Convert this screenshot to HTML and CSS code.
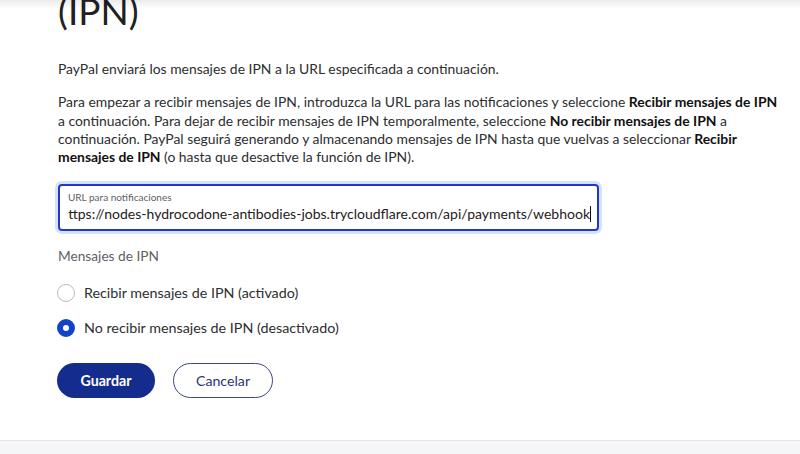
FILE: index.html
```html
<!DOCTYPE html>
<html lang="es">
<head>
<meta charset="utf-8">
<title>IPN</title>
<link rel="stylesheet" href="styles.css">
</head>
<body>
<div class="header-shadow"></div>
<main class="card">
  <h1 class="title">(IPN)</h1>
  <p class="intro">PayPal enviará los mensajes de IPN a la URL especificada a continuación.</p>
  <p class="desc">Para empezar a recibir mensajes de IPN, introduzca la URL para las notificaciones y seleccione <b>Recibir mensajes de IPN</b> a continuación. Para dejar de recibir mensajes de IPN temporalmente, seleccione <b>No recibir mensajes de IPN</b> a continuación. PayPal seguirá generando y almacenando mensajes de IPN hasta que vuelvas a seleccionar <b>Recibir mensajes de IPN</b> (o hasta que desactive la función de IPN).</p>
  <div class="field">
    <div class="field-label">URL para notificaciones</div>
    <div class="field-value"><span>ttps://nodes-hydrocodone-antibodies-jobs.trycloudflare.com/api/payments/webhook</span><span class="caret"></span></div>
  </div>
  <div class="group-label">Mensajes de IPN</div>
  <div class="radio-row first"><span class="radio"></span><span>Recibir mensajes de IPN (activado)</span></div>
  <div class="radio-row second"><span class="radio checked"></span><span>No recibir mensajes de IPN (desactivado)</span></div>
  <div class="actions">
    <button class="btn primary">Guardar</button>
    <button class="btn secondary">Cancelar</button>
  </div>
</main>
<div class="footer-bg"></div>
</body>
</html>
```
FILE: styles.css
```css
html, body {
  margin: 0;
  padding: 0;
  background: #ffffff;
}
body {
  font-family: Lato, "Noto Sans", sans-serif;
  color: #2c2e2f;
  width: 800px;
  height: 454px;
  overflow: hidden;
  position: relative;
}
.header-shadow {
  position: absolute;
  left: 0;
  top: 0;
  width: 800px;
  height: 9px;
  background: linear-gradient(rgba(0,0,0,0.08), rgba(0,0,0,0.02) 75%, rgba(0,0,0,0));
  z-index: 2;
}
.card {
  display: flow-root;
  height: 441px;
  padding: 0 15px 0 58px;
  box-sizing: border-box;
  border-bottom: 1px solid #e6e7ea;
}
.title {
  margin: -11.5px 0 0 0;
  font-size: 37px;
  font-weight: 400;
  line-height: 44px;
  color: #1f2021;
}
.intro {
  margin: 27.5px 0 0 0;
  font-size: 13.9px;
  line-height: 18.3px;
}
.desc {
  margin: 15px 0 0 0;
  font-size: 13.9px;
  line-height: 18.3px;
}
.desc b {
  font-weight: 700;
  color: #111;
}
.field {
  margin-top: 18px;
  width: 541px;
  height: 47px;
  box-sizing: border-box;
  border: 2px solid #2236c8;
  border-radius: 4px;
  box-shadow: 0 0 0 3px #d6e2fb;
  padding: 5px 0 0 8px;
  overflow: hidden;
}
.field-label {
  font-size: 10px;
  line-height: 13px;
  color: #5e6166;
}
.field-value {
  display: flex;
  justify-content: flex-end;
  align-items: center;
  padding-right: 6px;
  font-size: 14px;
  line-height: 20px;
  color: #1f2021;
  white-space: nowrap;
  overflow: hidden;
}
.caret {
  display: inline-block;
  flex: none;
  width: 1px;
  height: 16px;
  background: #111;
}
.group-label {
  margin-top: 16px;
  font-size: 13.7px;
  line-height: 18px;
  color: #5e6166;
}
.radio-row {
  display: flex;
  align-items: center;
  gap: 9px;
  font-size: 14.3px;
  line-height: 18px;
  margin-left: -1px;
}
.radio-row.first { margin-top: 19px; }
.radio-row.second { margin-top: 17px; }
.radio {
  width: 18px;
  height: 18px;
  border: 1px solid #b7bcc2;
  border-radius: 50%;
  box-sizing: border-box;
  background: #fff;
  flex: none;
}
.radio.checked {
  border: 6px solid #1443c6;
  background: #fff;
}
.actions {
  display: flex;
  gap: 18px;
  margin-top: 26px;
  margin-left: -1px;
}
.btn {
  height: 35px;
  border-radius: 18px;
  font-family: Lato, "Noto Sans", sans-serif;
  font-size: 14.2px;
  box-sizing: border-box;
  cursor: pointer;
}
.primary {
  width: 98px;
  background: #142c8e;
  color: #fff;
  border: none;
  font-weight: 700;
}
.secondary {
  width: 100px;
  background: #fff;
  color: #2a3572;
  border: 1px solid #3b4589;
}
.footer-bg {
  height: 13px;
  background: #f5f6f8;
}
```
